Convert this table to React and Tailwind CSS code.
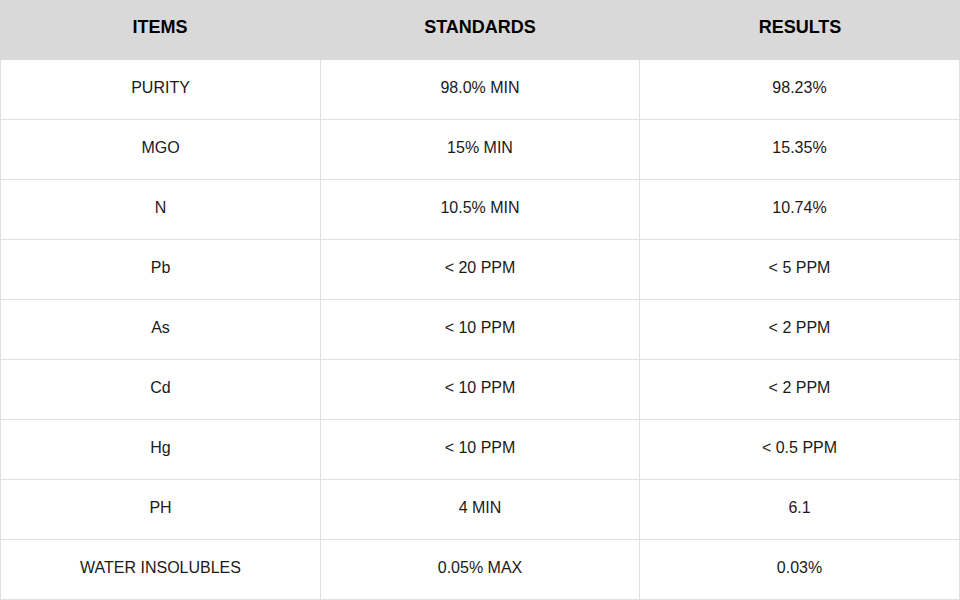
const rows = [
  ["PURITY", "98.0% MIN", "98.23%"],
  ["MGO", "15% MIN", "15.35%"],
  ["N", "10.5% MIN", "10.74%"],
  ["Pb", "< 20 PPM", "< 5 PPM"],
  ["As", "< 10 PPM", "< 2 PPM"],
  ["Cd", "< 10 PPM", "< 2 PPM"],
  ["Hg", "< 10 PPM", "< 0.5 PPM"],
  ["PH", "4 MIN", "6.1"],
  ["WATER INSOLUBLES", "0.05% MAX", "0.03%"],
];

export default function App() {
  return (
    <div
      className="w-[960px] h-[600px] bg-white text-[16px] text-[#1a1a1a]"
      style={{ fontFamily: '"Liberation Sans", Arial, sans-serif' }}
    >
      <div className="flex h-[60px] bg-[#d9d9d9] font-bold text-[18px] text-black">
        <div className="w-[320px] flex items-center justify-center pb-[6px]">ITEMS</div>
        <div className="w-[320px] flex items-center justify-center pb-[6px]">STANDARDS</div>
        <div className="w-[320px] flex items-center justify-center pb-[6px]">RESULTS</div>
      </div>
      {rows.map((r, i) => (
        <div key={i} className="flex h-[60px] border-l border-b border-[#e0e0e0]">
          <div className="w-[320px] flex items-center justify-center pb-[4px] border-r border-[#e0e0e0]">{r[0]}</div>
          <div className="w-[319px] flex items-center justify-center pb-[4px] border-r border-[#e0e0e0]">{r[1]}</div>
          <div className="w-[320px] flex items-center justify-center pb-[4px] border-r border-[#e0e0e0]">{r[2]}</div>
        </div>
      ))}
    </div>
  );
}
